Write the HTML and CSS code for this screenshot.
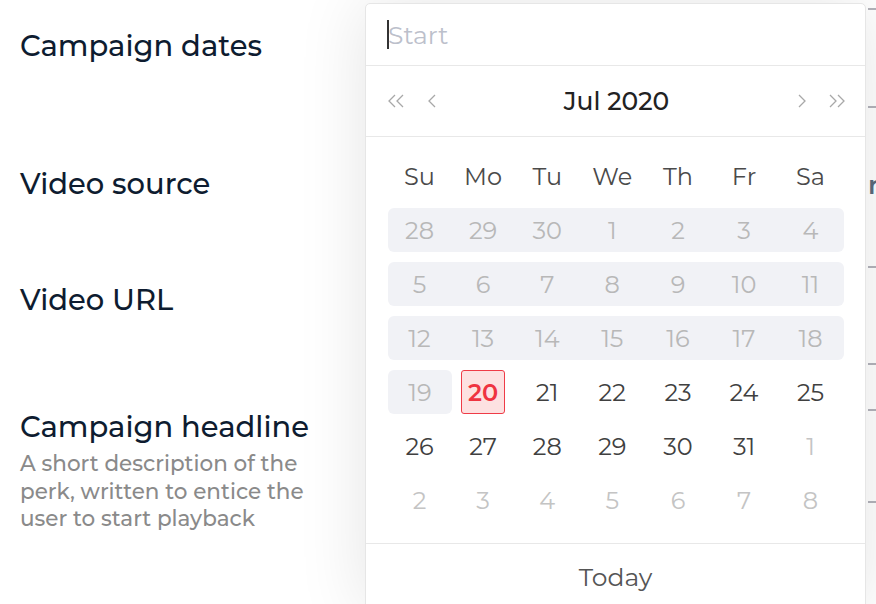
FILE: index.html
```html
<!DOCTYPE html>
<html lang="en">
  <head>
    <meta charset="UTF-8" />
    <meta name="viewport" content="width=device-width, initial-scale=1.0" />
    <title>Campaign</title>
    <link rel="stylesheet" href="styles.css">
  </head>
  <body>
    <div class="page">
      <form class="form">
        <div class="row row-dates">
          <div class="label-col"><h3 class="label">Campaign dates</h3></div>
          <div class="field-col"><div class="field field-dates"></div></div>
        </div>
        <div class="row row-source">
          <div class="label-col"><h3 class="label">Video source</h3></div>
          <div class="field-col"><div class="select-value">r</div></div>
        </div>
        <div class="row row-url">
          <div class="label-col"><h3 class="label">Video URL</h3></div>
          <div class="field-col"><div class="field field-url"></div></div>
        </div>
        <div class="row row-headline">
          <div class="label-col">
            <h3 class="label">Campaign headline</h3>
            <p class="hint">A short description of the perk, written to entice the user to start playback</p>
          </div>
          <div class="field-col"><div class="field field-headline"></div></div>
        </div>
      </form>

      <!-- Date picker dropdown -->
      <div class="picker">
        <div class="picker-input">
          <span class="caret"></span><span class="placeholder">Start</span>
        </div>
        <div class="picker-header">
          <div class="nav">
            <svg width="16" height="14" viewBox="0 0 16 14"><path d="M7 1 1 7l6 6M15 1 9 7l6 6" fill="none" stroke="#a8a8a8" stroke-width="1.3"/></svg>
            <svg width="10" height="14" viewBox="0 0 10 14"><path d="M8 1 2 7l6 6" fill="none" stroke="#a8a8a8" stroke-width="1.3"/></svg>
          </div>
          <div class="month">Jul 2020</div>
          <div class="nav nav-right">
            <svg width="10" height="14" viewBox="0 0 10 14"><path d="M2 1l6 6-6 6" fill="none" stroke="#a8a8a8" stroke-width="1.3"/></svg>
            <svg width="16" height="14" viewBox="0 0 16 14"><path d="M1 1l6 6-6 6M9 1l6 6-6 6" fill="none" stroke="#a8a8a8" stroke-width="1.3"/></svg>
          </div>
        </div>
        <div class="picker-body">
          <div class="week weekdays">
            <span>Su</span><span>Mo</span><span>Tu</span><span>We</span><span>Th</span><span>Fr</span><span>Sa</span>
          </div>
          <div class="week in-range">
            <span>28</span><span>29</span><span>30</span><span>1</span><span>2</span><span>3</span><span>4</span>
          </div>
          <div class="week in-range">
            <span>5</span><span>6</span><span>7</span><span>8</span><span>9</span><span>10</span><span>11</span>
          </div>
          <div class="week in-range">
            <span>12</span><span>13</span><span>14</span><span>15</span><span>16</span><span>17</span><span>18</span>
          </div>
          <div class="week">
            <span class="disabled">19</span><span class="selected"><b>20</b></span><span>21</span><span>22</span><span>23</span><span>24</span><span>25</span>
          </div>
          <div class="week">
            <span>26</span><span>27</span><span>28</span><span>29</span><span>30</span><span>31</span><span class="other">1</span>
          </div>
          <div class="week">
            <span class="other">2</span><span class="other">3</span><span class="other">4</span><span class="other">5</span><span class="other">6</span><span class="other">7</span><span class="other">8</span>
          </div>
        </div>
        <div class="picker-footer">Today</div>
      </div>
    </div>
  </body>
</html>
```

FILE: styles.css
```css
body {
  margin: 0;
  font-family: Montserrat, "DejaVu Sans", sans-serif;
  background: #fff;
  overflow: hidden;
}
.page {
  position: relative;
  width: 876px;
  height: 604px;
  overflow: hidden;
}
/* Form rows */
.row {
  display: flex;
}
.label-col {
  width: 345px;
  padding-left: 20px;
  flex-shrink: 0;
}
.field-col {
  flex: 1;
  padding-left: 503px;
}
.label {
  margin: 0;
  font-size: 29px;
  font-weight: 500;
  line-height: 34px;
  color: #0e1c30;
}
.hint {
  margin: 6px 0 0;
  font-size: 21.5px;
  font-weight: 500;
  line-height: 27.5px;
  color: #8a8a8a;
  width: 310px;
}
.row-dates { height: 140px; }
.row-dates .label-col { padding-top: 29px; }
.row-source { height: 120px; }
.row-source .label-col { padding-top: 27px; }
.row-url { height: 130px; }
.row-url .label-col { padding-top: 23px; }
.row-headline { height: 214px; }
.row-headline .label-col { padding-top: 20px; }

.field {
  border-top: 2px solid #b3b3bb;
  border-bottom: 2px solid #b3b3bb;
}
.field-dates { margin-top: 8px; height: 96px; }
.field-url { margin-top: 6px; height: 95px; }
.field-headline { margin-top: 19px; height: 90px; }
.select-value {
  margin-top: 30px;
  font-size: 26px;
  font-weight: 600;
  color: #5b6b7c;
  line-height: 30px;
}
/* Date picker */
.picker {
  position: absolute;
  left: 365px;
  top: 3px;
  width: 499px;
  background: #fff;
  border: 1px solid #e6e6e6;
  border-radius: 5px;
  box-shadow: 0 0 70px rgba(0, 0, 0, 0.11);
}
.picker-input {
  height: 61px;
  display: flex;
  align-items: center;
  padding-left: 21px;
  border-bottom: 1px solid #e8e8e8;
}
.caret {
  width: 2px;
  height: 29px;
  background: #333;
}
.placeholder {
  font-size: 25px;
  color: #bcc0cb;
  margin-left: -1px;
  margin-top: 1px;
}
.picker-header {
  height: 70px;
  display: flex;
  align-items: center;
  justify-content: space-between;
  padding: 0 20px 0 22px;
  border-bottom: 1px solid #e8e8e8;
}
.nav {
  display: flex;
  align-items: center;
  gap: 23px;
  width: 60px;
}
.nav-right {
  justify-content: flex-end;
  gap: 22px;
}
.month {
  font-size: 25px;
  font-weight: 500;
  color: #222;
}
.picker-body {
  padding: 17px 21px 21px 22px;
  display: flex;
  flex-direction: column;
  gap: 10px;
  border-bottom: 1px solid #e8e8e8;
}
.week {
  display: grid;
  grid-template-columns: 63px 64px 64.5px 65.5px 66px 66px 67px;
  height: 44px;
  border-radius: 6px;
}
.week span {
  display: flex;
  align-items: center;
  justify-content: center;
  font-size: 24px;
  color: #404040;
}
.weekdays span {
  color: #4a4a4a;
}
.week.in-range {
  background: #f1f2f6;
}
.week.in-range span,
.week span.disabled {
  color: #b8b8b8;
}
.week span.disabled {
  background: #f1f2f6;
  border-radius: 6px;
  margin-right: -1px;
}
.week span.other {
  color: #c4c4c4;
}
.week span.selected b {
  width: 42px;
  height: 42px;
  display: flex;
  align-items: center;
  justify-content: center;
  font-weight: 600;
  color: #ef3340;
  background: #fde1e1;
  border: 1px solid #ef3b47;
  border-radius: 3px;
}
.picker-footer {
  height: 66px;
  display: flex;
  align-items: center;
  justify-content: center;
  font-size: 25px;
  color: #555;
}
```
